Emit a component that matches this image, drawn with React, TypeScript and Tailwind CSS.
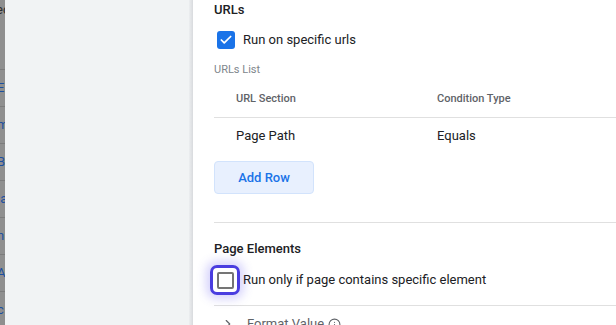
import React from 'react';
import { Check, ChevronRight, Info } from 'lucide-react';

const behindRows = ['E', 'm', 'B', 'la', 'n', 'A', 'c'];

function Checkbox({ checked, focused }: { checked?: boolean; focused?: boolean }) {
  if (checked) {
    return (
      <div className="flex h-[18px] w-[18px] shrink-0 items-center justify-center rounded-[3px] bg-[#1a73e8]">
        <Check className="h-[14px] w-[14px] text-white" strokeWidth={3} />
      </div>
    );
  }
  return (
    <div
      className={`flex h-[30px] w-[30px] shrink-0 items-center justify-center rounded-[7px] ${
        focused ? 'border-[3px] border-[#4a3de0] shadow-[0_0_10px_4px_rgba(90,80,240,0.25)]' : ''
      }`}
    >
      <div className="h-[17px] w-[17px] rounded-[2px] border-2 border-[#757575] bg-white" />
    </div>
  );
}

export default function App() {
  return (
    <div
      className="flex h-[325px] w-[616px] overflow-hidden bg-white text-[#202124]"
      style={{ fontFamily: 'Roboto, "Liberation Sans", sans-serif' }}
    >
      {/* page behind the drawer, dimmed */}
      <div className="w-[5px] shrink-0 overflow-hidden bg-[#8f8f8f]">
        <div className="-ml-[4px] h-[70px] border-b border-[#7c7c7c] pt-[2px] text-[13px] leading-[16px] text-[#2d2d2d]">
          ec
        </div>
        {behindRows.map((r) => (
          <div
            key={r}
            className="-ml-[3px] flex h-[37px] items-center border-b border-[#7c7c7c] text-[13px] text-[#1c4fa0]"
          >
            {r}
          </div>
        ))}
      </div>

      {/* grey side of drawer */}
      <div className="w-[184px] shrink-0 bg-[#f1f3f4]" />
      <div className="w-[4px] shrink-0 bg-gradient-to-r from-[#eceef0] to-[#d9dbde]" />

      {/* content */}
      <div className="min-w-0 flex-1 pl-[21px] pt-[2px]">
        <div className="text-[13px] font-medium leading-[16px]">URLs</div>

        <div className="mt-[13px] flex h-[18px] items-center gap-[8px] pl-[3px]">
          <Checkbox checked />
          <span className="text-[13px] leading-[16px]">Run on specific urls</span>
        </div>

        <div className="mt-[13px] text-[11px] leading-[16px] text-[#80868b]">URLs List</div>

        <div className="mt-[13px] flex border-b border-[#e0e0e0] pb-[10px] text-[11px] font-medium leading-[16px] text-[#5f6368]">
          <div className="w-[223px] pl-[22px]">URL Section</div>
          <div>Condition Type</div>
        </div>

        <div className="flex pt-[10px] text-[13px] leading-[16px]">
          <div className="w-[223px] pl-[22px]">Page Path</div>
          <div>Equals</div>
        </div>

        <button className="mt-[17px] block h-[33px] w-[100px] rounded-[4px] border border-[#d2e3fc] bg-[#e8f0fe] text-[13px] font-medium text-[#1a73e8]">
          Add Row
        </button>

        <div className="mt-[28px] border-t border-[#e0e0e0]" />

        <div className="mt-[18px] text-[13px] font-medium leading-[16px]">Page Elements</div>

        <div className="-ml-[4px] mt-[8px] flex items-center gap-[3px]">
          <Checkbox focused />
          <span className="text-[13px] leading-[16px]">Run only if page contains specific element</span>
        </div>

        <div className="mt-[10px] border-t border-[#e0e0e0]" />

        <div className="mt-[10px] flex items-center gap-[12px] pl-[7px] text-[13px] leading-[16px] text-[#5f6368]">
          <ChevronRight className="h-[14px] w-[14px]" />
          <span className="flex items-center gap-[4px]">
            Format Value <Info className="h-[13px] w-[13px]" />
          </span>
        </div>
      </div>
    </div>
  );
}
